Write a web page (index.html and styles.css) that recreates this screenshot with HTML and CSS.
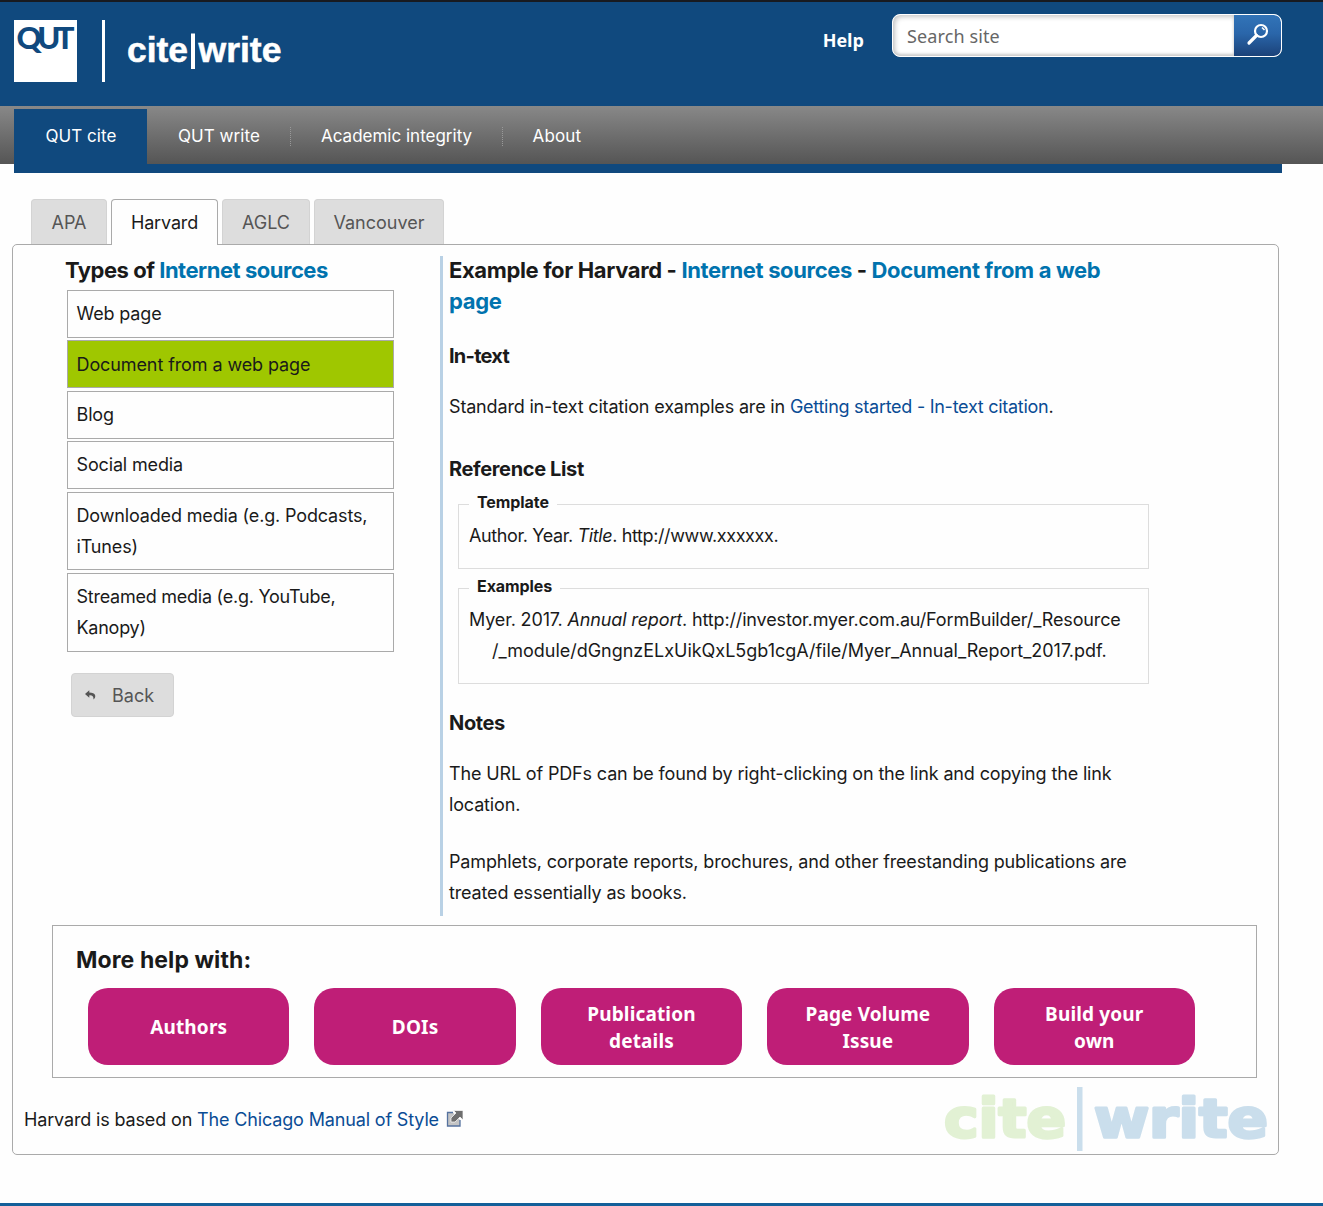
FILE: index.html
```html
<!DOCTYPE html>
<html lang="en">
<head>
<meta charset="utf-8">
<title>QUT cite|write - Harvard</title>
<link rel="stylesheet" href="styles.css">
</head>
<body>
<header class="header">
  <div class="brand">
    <svg class="logo" width="63" height="62" viewBox="0 0 63 62" role="img" aria-label="QUT">
      <rect width="63" height="62" fill="#fff"/>
      <text class="logo-text" x="2.500" y="28.500" textLength="58" lengthAdjust="spacing">QUT</text>
    </svg>
    <span class="brand-rule"></span>
    <svg class="site-name" width="156" height="44" viewBox="0 0 156 44" role="img" aria-label="cite|write">
      <text class="site-text" x="0" y="29.500" textLength="61" lengthAdjust="spacingAndGlyphs">cite</text>
      <rect x="64" y="1.500" width="4" height="35.500" fill="#fff"/>
      <text class="site-text" x="71.500" y="29.500" textLength="83" lengthAdjust="spacingAndGlyphs">write</text>
    </svg>
  </div>
  <div class="tools">
    <a class="help">Help</a>
    <div class="search">
      <span class="search-field">Search site</span>
      <span class="search-button">
        <svg width="24" height="24" viewBox="0 0 24 24" fill="none" stroke="#fff">
          <circle cx="16" cy="8" r="6" stroke-width="2.200"/>
          <path d="M17 4.500l2.500 2.500" stroke-width="1.600"/>
          <path d="M11.500 12.500L4 20" stroke-width="3.200" stroke-linecap="round"/>
        </svg>
      </span>
    </div>
  </div>
</header>
<nav class="nav">
  <a class="nav-item nav-active">QUT cite</a>
  <a class="nav-item nav-write">QUT write</a>
  <a class="nav-item nav-integrity">Academic integrity</a>
  <a class="nav-item nav-about">About</a>
</nav>
<div class="nav-bar"></div>

<div class="tabs">
  <a class="tab tab-apa">APA</a>
  <a class="tab tab-harvard">Harvard</a>
  <a class="tab tab-aglc">AGLC</a>
  <a class="tab tab-vancouver">Vancouver</a>
</div>
<main class="panel">
  <div class="columns">
    <section class="types">
      <h2 class="types-title">Types of <span class="accent">Internet sources</span></h2>
      <ul class="type-list">
        <li class="type">Web page</li>
        <li class="type type-current">Document from a web page</li>
        <li class="type">Blog</li>
        <li class="type">Social media</li>
        <li class="type">Downloaded media (e.g. Podcasts, iTunes)</li>
        <li class="type type-streamed">Streamed media (e.g. YouTube, Kanopy)</li>
      </ul>
      <a class="back">
        <svg width="11" height="10" viewBox="0 0 11 10"><path d="M4.300.200L0 4l4.300 3.800V5.400C7 5.100 8.700 6.200 8.500 9.600c1-.700 2.100-2.300 1.700-4C9.700 3.300 7.300 2.600 4.300 2.600z" fill="#555"/></svg>
        Back
      </a>
    </section>
    <section class="example">
      <h2 class="example-title">Example for Harvard - <span class="accent">Internet sources</span> - <span class="accent">Document from a web<br>page</span></h2>
      <h3 class="sub sub-intext">In-text</h3>
      <p class="text text-intext">Standard in-text citation examples are in <a class="link">Getting started - In-text citation</a>.</p>
      <h3 class="sub sub-list">Reference List</h3>
      <fieldset class="box">
        <legend class="legend">Template</legend>
        <p class="cite cite-template">Author. Year. <em>Title</em>. http://www.xxxxxx.</p>
      </fieldset>
      <fieldset class="box">
        <legend class="legend">Examples</legend>
        <p class="cite">Myer. 2017. <em>Annual report</em>. http://investor.myer.com.au/FormBuilder/_Resource<br><span class="cite-path">/_module/dGngnzELxUikQxL5gb1cgA/file/Myer_Annual_Report_2017.pdf.</span></p>
      </fieldset>
      <h3 class="sub sub-notes">Notes</h3>
      <p class="text">The URL of PDFs can be found by right-clicking on the link and copying the link<br>location.</p>
      <p class="text">Pamphlets, corporate reports, brochures, and other freestanding publications are<br>treated essentially as books.</p>
    </section>
  </div>
  <section class="more">
    <h2 class="more-title">More help with:</h2>
    <div class="more-buttons">
      <a class="pill">Authors</a>
      <a class="pill">DOIs</a>
      <a class="pill">Publication<br>details</a>
      <a class="pill">Page Volume<br>Issue</a>
      <a class="pill">Build your<br>own</a>
    </div>
  </section>
  <div class="panel-foot">
    <p class="based">Harvard is based on <a class="link-manual">The Chicago Manual of Style</a>
      <svg class="ext" width="18" height="18" viewBox="0 0 18 18">
        <path d="M7 2.500H1.500v13.500h12.500V10" fill="#c4c4c4" stroke="#55729f" stroke-width="1.300"/>
        <path d="M7.500.500H17V10l-3-3-5 5H5V8l5-5z" fill="#6e6e6e" stroke="#fff" stroke-width=".7"/>
      </svg>
    </p>
    <svg class="watermark" width="326" height="66" viewBox="0 0 326 66" role="img" aria-label="cite|write">
      <text class="mark mark-cite" x="1" y="51" textLength="122" lengthAdjust="spacingAndGlyphs">cite</text>
      <rect x="134" y="1" width="5.500" height="64" fill="#cadeec"/>
      <text class="mark mark-write" x="151" y="51" textLength="174" lengthAdjust="spacingAndGlyphs">write</text>
    </svg>
  </div>
</main>
<div class="footer-line"></div>
</body>
</html>
```
FILE: styles.css
```css
* { box-sizing: border-box; }
body {
  margin: 0;
  background: #fefefe;
  color: #1a1a1a;
  font: 18px/31px Inter, "Liberation Sans", sans-serif;
  letter-spacing: -0.15px;
}
h2, h3, p, ul { margin: 0; padding: 0; }

.header {
  display: flex;
  justify-content: space-between;
  align-items: flex-start;
  height: 106px;
  padding: 0 41px 0 14px;
  background: #10497e;
  border-top: 2px solid #181a20;
}
.brand { display: flex; margin-top: 18px; }
.brand-rule { width: 3px; height: 62px; margin-left: 25px; background: #fff; }
.site-name { margin: 12px 0 0 22px; }
.logo, .site-name, .watermark { overflow: visible; }
.logo-text { font: 900 31px Lato, sans-serif; letter-spacing: 0; fill: #10497e; }
.site-text { font: 700 35px "Liberation Sans", sans-serif; letter-spacing: 0; fill: #fff; stroke: #fff; stroke-width: .5; }
.tools { display: flex; margin-top: 12px; }
.help { margin: 11px 28px 0 0; font: 700 18px/31px "Open Sans", sans-serif; letter-spacing: 0; color: #fff; }
.search {
  display: flex;
  width: 390px;
  height: 43px;
  border: 1px solid #fff;
  border-radius: 8px;
  background: #fff;
  overflow: hidden;
}
.search-field {
  flex: 1;
  padding-left: 14px;
  font: 18px/43px "Noto Sans", sans-serif;
  letter-spacing: .12px;
  color: #666;
  border-radius: 7px 0 0 7px;
  box-shadow: inset 2px 2px 5px #c8c8c8, inset 0 -2px 3px #ccc;
}
.search-button {
  width: 47px;
  padding: 8px 0 0 11px;
  line-height: 0;
  background: linear-gradient(#3274b8, #2a66aa 45%, #1b4279);
  border-radius: 0 7px 7px 0;
}

.nav {
  display: flex;
  height: 58px;
  padding: 3px 0 0 14px;
  background: linear-gradient(#888, #555);
  color: #fff;
  font-size: 17px;
  letter-spacing: 0;
}
.nav-item { height: 55px; line-height: 54px; white-space: nowrap; }
.nav-active { width: 133px; padding-left: 31.500px; background: #10497e; }
.nav-write { width: 144px; padding-left: 31px; }
.nav-integrity { width: 212px; padding-left: 30px; }
.nav-about { padding-left: 29.500px; letter-spacing: .15px; }
.nav-write, .nav-integrity {
  background: repeating-linear-gradient(#999 0 1px, transparent 1px 2px) 100% 18px / 1px 19px no-repeat;
}
.nav-active, .nav-write { letter-spacing: .05px; }
.nav-bar { height: 9px; margin: 0 41px 0 14px; background: #10497e; }

.tabs { display: flex; gap: 4px; padding: 26px 0 0 31px; position: relative; z-index: 1; }
.tab {
  height: 45px;
  border: 1px solid #d3d3d3;
  border-bottom: 0;
  border-radius: 4px 4px 0 0;
  background: #ddd;
  color: #555;
  line-height: 46px;
  text-align: center;
  letter-spacing: 0;
}
.tab-apa { width: 76px; }
.tab-harvard { width: 107px; height: 46px; border-color: #aaa; background: #fefefe; color: #1a1a1a; letter-spacing: -.15px; }
.tab-aglc { width: 88px; }
.tab-vancouver { width: 130px; }

.panel {
  width: 1267px;
  height: 911px;
  margin: -1px 0 0 12px;
  padding-top: 11px;
  border: 1px solid #aaa;
  border-radius: 5px;
}
.columns { display: flex; height: 660px; }
.types { width: 427px; padding-left: 52px; }
.types-title, .example-title {
  margin-top: -1px;
  font-size: 22px;
  font-weight: 700;
  line-height: 31px;
  letter-spacing: -.36px;
}
.types-title { letter-spacing: -.48px; }
.accent { color: #0073ae; }
.type-list { display: flex; flex-direction: column; gap: 2.500px; width: 329px; padding: 4px 0 0 2px; list-style: none; }
.type { padding: 7.200px 20px 7.700px 8.500px; border: 1px solid #aaa; line-height: 31px; }
.type-current { background: #9fc700; letter-spacing: -.1px; }
.type-streamed { letter-spacing: -.25px; }
.back {
  display: flex;
  align-items: center;
  gap: 16px;
  width: 103px;
  height: 44px;
  margin: 21px 0 0 6px;
  padding: 1px 0 0 13px;
  border: 1px solid #d3d3d3;
  border-radius: 4px;
  background: #ddd;
  color: #555;
  letter-spacing: 0;
}
.example { flex: 1; border-left: 3px solid #b9d1e5; padding-left: 6px; }
.link, .link-manual { color: #0a4c95; }
.link { letter-spacing: -.27px; }
.sub { font-size: 20px; font-weight: 700; line-height: 31px; letter-spacing: -.36px; }
.sub-intext { margin-top: 24px; letter-spacing: -.75px; }
.text { margin-top: 20px; }
.text-intext { margin-top: 19px; letter-spacing: -.17px; }
.text + .text { margin-top: 26px; }
.sub-list { margin-top: 32px; }
.sub-notes { margin-top: 24px; }
.sub-notes + .text { margin-top: 19px; }
.box { width: 691px; margin: 0 0 0 9px; padding: 0 10px 17px; border: 1px solid #ddd; }
.box + .box { margin-top: 4px; }
.sub-list + .box { margin-top: 4px; }
.legend {
  height: 30px;
  margin: 0;
  padding: 0 8px 0 8px;
  font-size: 16px;
  font-weight: 700;
  line-height: 27px;
  letter-spacing: -.08px;
}
.cite { margin-top: 1px; padding-left: 23px; text-indent: -23px; white-space: nowrap; }
.cite-template { letter-spacing: -.38px; }
.cite-path { letter-spacing: -.02px; }

.more { width: 1205px; height: 153px; margin: 9px 0 0 39px; padding: 18px 0 0 23px; border: 1px solid #aaa; }
.more-title { font-size: 23px; font-weight: 700; line-height: 32px; letter-spacing: .08px; }
.more-buttons { display: grid; grid-template-columns: repeat(5, 1fr); gap: 25px; margin: 12px 61px 0 12px; }
.pill {
  display: flex;
  align-items: center;
  justify-content: center;
  height: 77px;
  padding-top: 2px;
  border-radius: 20px;
  background: #bf1e77;
  color: #fff;
  font: 700 19px/27px "Noto Sans", sans-serif;
  letter-spacing: .15px;
  text-align: center;
}
.panel-foot { display: flex; justify-content: space-between; padding: 8px 9px 0 11px; }
.based { margin-top: 18px; }
.ext { margin-left: 2px; vertical-align: -2px; }
.mark { font: 700 54px "DejaVu Sans", sans-serif; letter-spacing: 0; stroke-width: 3; stroke-linejoin: round; }
.mark-cite { fill: #e2f1d4; stroke: #e2f1d4; }
.mark-write { fill: #cadeec; stroke: #cadeec; }
.footer-line { height: 3px; margin-top: 48px; background: #125f99; }
```
